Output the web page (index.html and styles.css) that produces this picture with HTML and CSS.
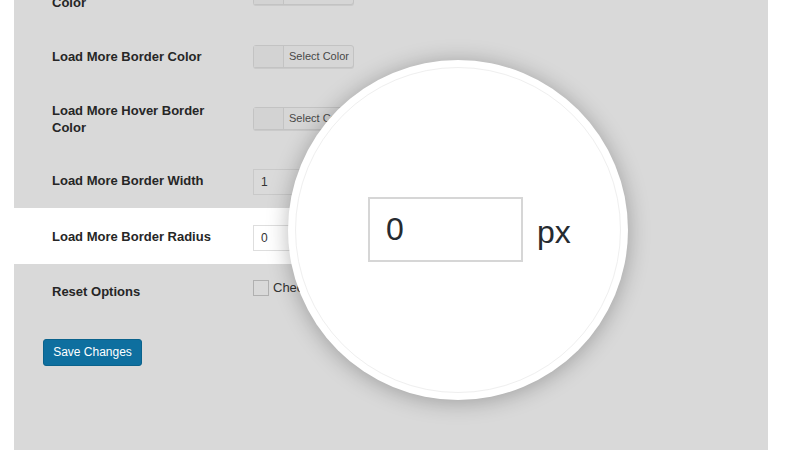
FILE: index.html
```html
<!DOCTYPE html>
<html>
<head>
<meta charset="utf-8">
<link rel="stylesheet" href="styles.css">
</head>
<body>
<div class="page">
  <div class="panel">
    <div class="form">
      <div class="row tall">
        <div class="label">Load More Button Hover Color</div>
        <div class="field"><span class="color-btn"><span class="swatch"></span><span class="btn-text">Select Color</span></span></div>
      </div>
      <div class="row">
        <div class="label">Load More Border Color</div>
        <div class="field"><span class="color-btn"><span class="swatch"></span><span class="btn-text">Select Color</span></span></div>
      </div>
      <div class="row tall">
        <div class="label">Load More Hover Border Color</div>
        <div class="field"><span class="color-btn"><span class="swatch"></span><span class="btn-text">Select Color</span></span></div>
      </div>
      <div class="row width-row">
        <div class="label">Load More Border Width</div>
        <div class="field"><span class="num-input">1</span></div>
      </div>
      <div class="row active">
        <div class="label">Load More Border Radius</div>
        <div class="field"><span class="num-input white">0</span></div>
      </div>
      <div class="row reset-row">
        <div class="label">Reset Options</div>
        <div class="field check-field"><span class="checkbox"></span><span class="check-text">Check to reset options</span></div>
      </div>
    </div>
    <div class="submit"><span class="save-btn">Save Changes</span></div>
  </div>
  <div class="magnifier">
    <div class="big-input">0</div>
    <span class="unit">px</span>
  </div>
</div>
</body>
</html>
```
FILE: styles.css
```css
html, body {
  margin: 0;
  padding: 0;
  background: #ffffff;
  font-family: "Liberation Sans", Arial, sans-serif;
  color: #262626;
}
.page {
  position: relative;
  width: 800px;
  height: 450px;
  overflow: hidden;
  display: flex;
}
.panel {
  margin-left: 14px;
  width: 754px;
  height: 450px;
  background: #d9d9d9;
}
.form {
  margin-top: -41px;
  display: flex;
  flex-direction: column;
}
.row {
  display: flex;
  align-items: center;
  height: 56px;
}
.row.tall { height: 69px; }
.row.width-row { height: 55px; }
.row.reset-row { height: 54px; }
.row.active {
  background: #ffffff;
  width: 400px;
}
.label {
  width: 180px;
  padding-left: 38px;
  padding-right: 21px;
  font-size: 13px;
  font-weight: bold;
  line-height: 17px;
  color: #262626;
}
.field {
  display: flex;
  align-items: center;
}
.color-btn {
  display: flex;
  width: 99px;
  height: 21px;
  border: 1px solid #c3c3c3;
  border-radius: 3px;
  background: #d6d6d6;
  box-shadow: 0 1px 0 #cacaca;
}
.swatch {
  width: 29px;
  border-right: 1px solid #c3c3c3;
  background: #d3d3d3;
}
.btn-text {
  flex: 1;
  font-size: 11px;
  line-height: 21px;
  color: #484848;
  padding-left: 5px;
}
.num-input {
  width: 64px;
  height: 24px;
  border: 1px solid #c9c9c9;
  background: #dadada;
  font-size: 12px;
  line-height: 24px;
  padding-left: 7px;
  color: #333;
  margin-top: 2px;
}
.num-input.white {
  background: #ffffff;
  border-color: #dedede;
  margin-top: 4px;
}
.check-field { margin-top: -7px; }
.checkbox {
  width: 14px;
  height: 14px;
  border: 1px solid #b0b0b0;
  background: #d9d9d9;
  margin-right: 4px;
}
.check-text {
  font-size: 13px;
  color: #333;
}
.submit {
  margin-top: 21px;
  padding-left: 29px;
}
.save-btn {
  display: inline-block;
  width: 97px;
  height: 25px;
  border: 1px solid #0a628c;
  border-radius: 3px;
  background: #0e6f9f;
  color: #ffffff;
  font-size: 12px;
  line-height: 25px;
  text-align: center;
}
.magnifier {
  position: absolute;
  left: 288px;
  top: 60px;
  width: 340px;
  height: 340px;
  box-sizing: border-box;
  border-radius: 50%;
  background: #ffffff;
  box-shadow: 0 2px 22px rgba(0, 0, 0, 0.28);
  display: flex;
  align-items: center;
  padding-left: 80px;
}
.magnifier::before {
  content: "";
  position: absolute;
  left: 7px;
  top: 7px;
  right: 7px;
  bottom: 7px;
  border-radius: 50%;
  border: 1px solid #efefef;
}
.big-input {
  width: 135px;
  height: 61px;
  border: 2px solid #d6d6d6;
  padding-left: 16px;
  font-size: 32px;
  line-height: 61px;
  color: #262b30;
  background: #ffffff;
  margin-top: -1px;
}
.unit {
  margin-left: 14px;
  font-size: 32px;
  color: #262b30;
  margin-top: 4px;
}
```
